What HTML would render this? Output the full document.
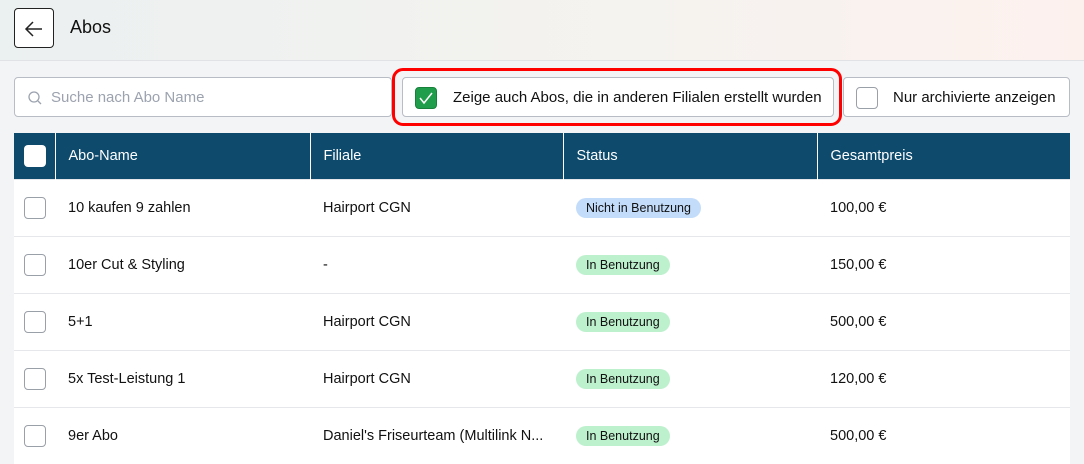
<!DOCTYPE html><html><head><style>
*{box-sizing:border-box;margin:0;padding:0}
body{width:1084px;height:464px;overflow:hidden;background:#f3f4f6;font-family:"Liberation Sans",sans-serif;color:#111;position:relative}
.hdr{position:absolute;left:0;top:0;width:1084px;height:61px;background:linear-gradient(90deg,#ebf0f0,#f5f3ef 60%,#fdf1ee);border-bottom:1px solid #e0e2e5}
.back{position:absolute;left:14px;top:8px;width:40px;height:40px;border:1px solid #222;border-radius:4px;background:#fff}
.title{position:absolute;left:70px;top:17px;font-size:18px}
.box{position:absolute;background:#fff;border:1px solid #b8bcc4;border-radius:4px}
.cb{position:absolute;width:22px;height:22px;border:1px solid #9aa0a8;border-radius:4px;background:#fff}
.red{position:absolute;left:392px;top:68px;width:450px;height:58px;border:3.5px solid #f00;border-radius:11px}
table{position:absolute;left:14px;top:133px;width:1056px;border-collapse:collapse;background:#fff}
th{background:#0e4a6c;color:#fff;font-weight:normal;text-align:left;height:46px;font-size:14.5px;padding-left:13px;border-left:1px solid #fff}
th:first-child{border-left:none}
td{height:57px;font-size:14.5px;padding-left:13px;border-top:1px solid #e5e7eb;position:relative}
.pill{display:inline-block;font-size:12.5px;padding:3px 10px;border-radius:10px}
.n{background:#c3dcfa}.g{background:#bdf0cd}
</style></head><body>
<div class="hdr"><div class="back"><svg width="40" height="40" viewBox="0 0 40 40"><path d="M27 20H12M18 13l-7 7 7 7" stroke="#222" stroke-width="1.5" fill="none"/></svg></div><div class="title">Abos</div></div>
<div class="box" style="left:14px;top:77px;width:378px;height:40px"><svg style="position:absolute;left:12px;top:12px" width="16" height="16" viewBox="0 0 16 16"><circle cx="7" cy="7" r="5" stroke="#9ca3af" fill="none" stroke-width="1.3"/><path d="M11 11l3 3" stroke="#9ca3af" stroke-width="1.3"/></svg><span style="position:absolute;left:36px;top:11px;font-size:15px;color:#9ca3af">Suche nach Abo Name</span></div>
<div class="box" style="left:402px;top:77px;width:432px;height:40px"><div class="cb" style="left:12px;top:9px;background:#1f9d4a;border-color:#17813b"><svg width="20" height="20" viewBox="0 0 20 20"><path d="M4 10l4 5 8-10" stroke="#fff" stroke-width="1.5" fill="none"/></svg></div><span style="position:absolute;left:50px;top:11px;font-size:15px">Zeige auch Abos, die in anderen Filialen erstellt wurden</span></div>
<div class="red"></div>
<div class="box" style="left:843px;top:77px;width:227px;height:40px"><div class="cb" style="left:12px;top:9px"></div><span style="position:absolute;left:49px;top:11px;font-size:15px">Nur archivierte anzeigen</span></div>
<table>
<tr><th style="width:41px;padding-left:10px"><div class="cb" style="position:static;border:none"></div></th><th style="width:255px">Abo-Name</th><th style="width:253px">Filiale</th><th style="width:254px">Status</th><th>Gesamtpreis</th></tr>
<tr><td style="padding-left:10px"><div class="cb" style="position:static"></div></td><td>10 kaufen 9 zahlen</td><td>Hairport CGN</td><td><span class="pill n">Nicht in Benutzung</span></td><td>100,00 €</td></tr>
<tr><td style="padding-left:10px"><div class="cb" style="position:static"></div></td><td>10er Cut &amp; Styling</td><td>-</td><td><span class="pill g">In Benutzung</span></td><td>150,00 €</td></tr>
<tr><td style="padding-left:10px"><div class="cb" style="position:static"></div></td><td>5+1</td><td>Hairport CGN</td><td><span class="pill g">In Benutzung</span></td><td>500,00 €</td></tr>
<tr><td style="padding-left:10px"><div class="cb" style="position:static"></div></td><td>5x Test-Leistung 1</td><td>Hairport CGN</td><td><span class="pill g">In Benutzung</span></td><td>120,00 €</td></tr>
<tr><td style="padding-left:10px"><div class="cb" style="position:static"></div></td><td>9er Abo</td><td>Daniel's Friseurteam (Multilink N...</td><td><span class="pill g">In Benutzung</span></td><td>500,00 €</td></tr>
</table>
</body></html>
